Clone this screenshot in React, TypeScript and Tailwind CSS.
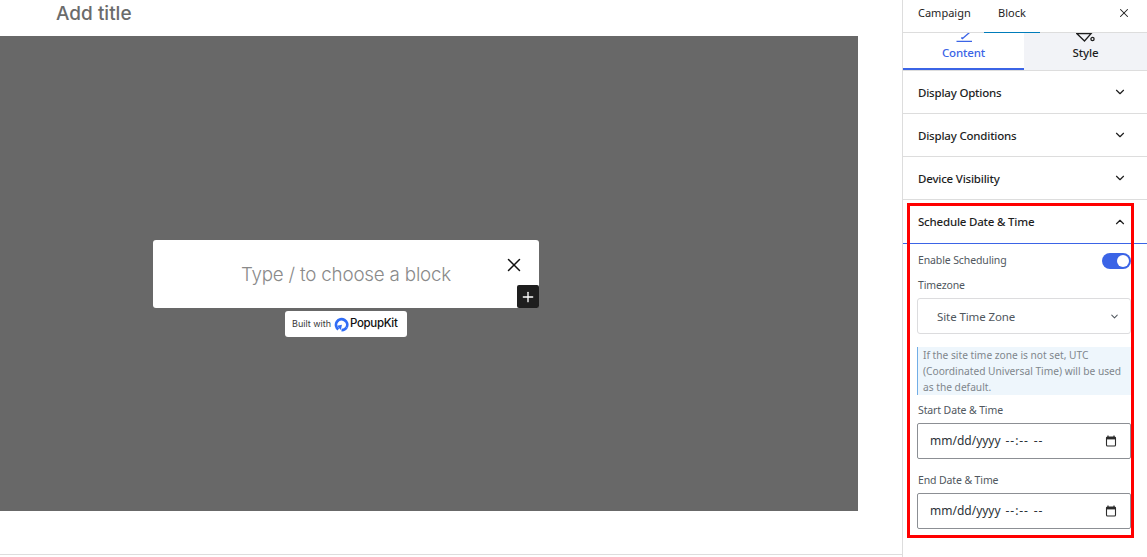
import { ChevronDown, ChevronUp, X, Plus } from "lucide-react";

const noto = "font-['Noto_Sans','Open_Sans',sans-serif]";

function PanelRow({ title }: { title: string }) {
  return (
    <div className="flex h-[43px] items-center justify-between border-b border-[#dddddd] pl-[15px] pr-[20px]">
      <span className="pt-[2px] text-[11.5px] font-medium tracking-[-0.2px] text-[#1e1e1e]">{title}</span>
      <ChevronDown size={14} strokeWidth={2} className="text-[#1e1e1e]" />
    </div>
  );
}

function CalendarIcon() {
  return (
    <svg width="12" height="12" viewBox="0 0 12 12" fill="none">
      <path d="M3 0.5V2M9 0.5V2" stroke="#2b2b2b" strokeWidth="1.2" />
      <rect x="1.5" y="2" width="9" height="9" rx="1" stroke="#2b2b2b" strokeWidth="1.1" />
      <rect x="1.5" y="2" width="9" height="2.4" fill="#2b2b2b" />
    </svg>
  );
}

function DateField({ label }: { label: string }) {
  return (
    <div>
      <div className="mb-[6px] pl-[1px] text-[10.5px] leading-[14px] tracking-[-0.12px] text-[#50575e]">{label}</div>
      <div className="flex h-[36px] w-[214px] items-center justify-between rounded-[2px] border border-[#8c8f94] bg-white pl-[12px] pr-[13px]">
        <span className="flex gap-[5px] text-[12px] text-[#2c3338]">
          <span>mm/dd/yyyy</span>
          <span className="tracking-[0.9px]">--:--</span>
          <span className="tracking-[0.9px]">--</span>
        </span>
        <CalendarIcon />
      </div>
    </div>
  );
}

function PopupKitLogo() {
  return (
    <svg width="15" height="15" viewBox="0 0 15 15" fill="none">
      <path d="M4.4 12.4A5.6 5.6 0 1 1 12.6 10.4" stroke="#2f6cf6" strokeWidth="2.7" />
      <path d="M12.6 10.4A5.6 5.6 0 0 1 7.5 13.2" stroke="#2f6cf6" strokeWidth="2.7" />
      <path d="M3 8.8 8 7.8 6.8 13Z" fill="#2f6cf6" />
    </svg>
  );
}

export default function App() {
  return (
    <div className="relative flex h-[557px] w-[1147px] overflow-hidden bg-white font-['Inter',sans-serif]">
      <main className="h-[555px] w-[902px] border-b border-[#dddddd]">
        <div className="flex h-[36px] items-start pl-[56px] pt-[2px] text-[19px] font-medium leading-[24px] text-[#6b6b6b]">
          Add title
        </div>
        <div className="h-[475px] w-[858px] bg-[#686868] pl-[153px] pt-[204px]">
          <div className="relative flex h-[68px] w-[386px] items-center justify-center rounded-[3px] bg-white">
            <span className="pt-[2px] text-[18.8px] font-light tracking-[-0.2px] text-[#8a8a8a]">Type / to choose a block</span>
            <X size={22} strokeWidth={1.6} className="absolute left-[350px] top-[14px] text-[#111111]" />
            <div className="absolute bottom-0 right-0 flex h-[23px] w-[22px] items-center justify-center rounded-[2px] bg-[#1e1e1e] text-white">
              <Plus size={16} strokeWidth={2} />
            </div>
          </div>
          <div className="ml-[132px] mt-[3px] flex h-[26px] w-[122px] items-center rounded-[3px] bg-white pl-[7px]">
            <span className="mr-[3px] text-[9px] text-[#3a3a3a]">Built with</span>
            <PopupKitLogo />
            <span className="ml-[1px] text-[11.5px] font-medium tracking-[-0.35px] text-[#111111]">PopupKit</span>
          </div>
        </div>
      </main>

      <aside className={`h-[557px] w-[245px] overflow-hidden border-l border-[#dddddd] ${noto}`}>
        <div className="flex h-[33px] items-start border-b border-[#dddddd]">
          <div className="flex h-[26px] w-[81px] items-center pl-[15px] text-[11px] text-[#1e1e1e]">Campaign</div>
          <div className="flex h-[33px] w-[56px] justify-center border-b border-[#007cba] pt-[5px] text-[11px] leading-[16px] text-[#1e1e1e]">Block</div>
          <div className="ml-auto flex h-[26px] items-center pr-[16px]">
            <X size={14} strokeWidth={1.8} className="text-[#1e1e1e]" />
          </div>
        </div>

        <div className="flex h-[38px] border-b border-[#dddddd]">
          <div className="flex h-[37px] w-[121px] flex-col items-center overflow-hidden border-b-2 border-[#3b64e6] text-[#3b64e6]">
            <svg width="16" height="9" viewBox="0 0 16 9" fill="none" stroke="currentColor" strokeWidth="1.3">
              <path d="M6 6 13.5 -0.5" />
              <path d="M6 6V4" />
              <path d="M0.5 8.4H16" />
            </svg>
            <span className="mt-[3px] text-[11.5px] font-medium leading-[16px] tracking-[-0.15px]">Content</span>
          </div>
          <div className="flex h-[37px] flex-1 flex-col items-center overflow-hidden bg-[#f2f3f7] text-[#1e1e1e]">
            <svg width="20" height="9" viewBox="0 0 20 9" fill="none" stroke="currentColor" strokeWidth="1.3">
              <path d="M1 0.7H15L8.5 8Z" />
              <circle cx="16.5" cy="6" r="1.6" />
            </svg>
            <span className="mt-[3px] text-[11.5px] font-medium leading-[16px] tracking-[-0.15px]">Style</span>
          </div>
        </div>

        <PanelRow title="Display Options" />
        <PanelRow title="Display Conditions" />
        <PanelRow title="Device Visibility" />

        <div className="flex h-[44px] items-center justify-between border-b border-[#3b64e6] pl-[15px] pr-[20px]">
          <span className="text-[11.5px] font-medium tracking-[-0.2px] text-[#1e1e1e]">Schedule Date &amp; Time</span>
          <ChevronUp size={14} strokeWidth={2} className="text-[#1e1e1e]" />
        </div>

        <div className="pl-[14px] pr-[16px]">
          <div className="mt-[8px] flex h-[18px] items-center justify-between pl-[1px]">
            <span className="text-[10.5px] tracking-[-0.12px] text-[#50575e]">Enable Scheduling</span>
            <div className="flex h-[16px] w-[29px] items-center justify-end rounded-full bg-[#3b64e6] pr-[2px]">
              <div className="h-[12px] w-[12px] rounded-full bg-white" />
            </div>
          </div>
          <div className="mt-[8px] pl-[1px] text-[10.5px] leading-[14px] tracking-[-0.12px] text-[#50575e]">Timezone</div>
          <div className="mt-[6px] flex h-[36px] w-[214px] items-center justify-between rounded-[3px] border border-[#dcdcde] pl-[19px] pr-[10px]">
            <span className="pt-[1px] text-[11.5px] tracking-[-0.1px] text-[#50575e]">Site Time Zone</span>
            <ChevronDown size={11} strokeWidth={2.2} className="text-[#50575e]" />
          </div>
          <div className="mt-[13px] w-[214px] border-l border-[#72aee6] bg-[#eef6fc] pl-[5px] pr-[8px] text-[10.2px] leading-[16px] text-[#7f868c]">
            If the site time zone is not set, UTC (Coordinated Universal Time) will be used as the default.
          </div>
          <div className="mt-[8px] flex flex-col gap-[14px]">
            <DateField label="Start Date & Time" />
            <DateField label="End Date & Time" />
          </div>
        </div>
      </aside>

      {/* annotation box drawn over the screenshot */}
      <div className="pointer-events-none absolute left-[907px] top-[203px] h-[335px] w-[227px] border-[3px] border-[#ff0000]" />
    </div>
  );
}
